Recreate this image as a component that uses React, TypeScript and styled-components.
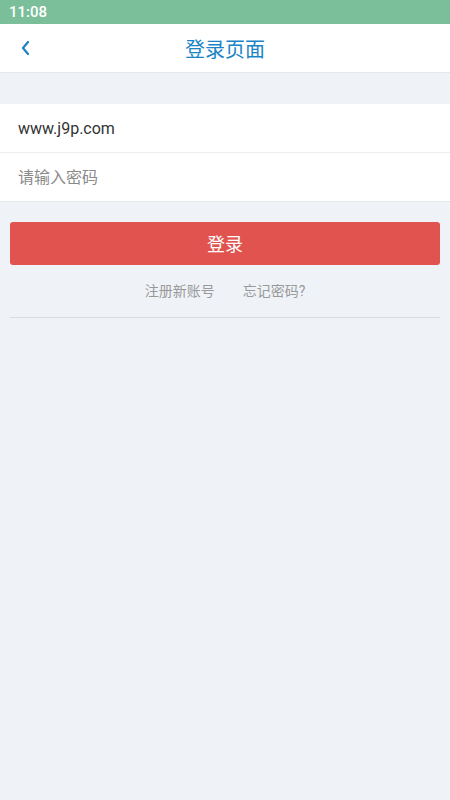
import React from "react";
import styled, { createGlobalStyle } from "styled-components";

const GlobalStyle = createGlobalStyle`
  html, body {
    margin: 0;
    padding: 0;
    background: #eff3f8;
    font-family: Roboto, "Noto Sans CJK SC", sans-serif;
  }
`;

const Page = styled.div`
  min-height: 800px;
  background: #eff3f8;
`;

const StatusBar = styled.div`
  height: 24px;
  background: #7bbf9a;
  color: #fff;
  font-size: 15px;
  font-weight: 500;
  display: flex;
  align-items: center;
  padding: 0 9px;
`;

const Header = styled.div`
  height: 48px;
  background: #fff;
  border-bottom: 1px solid #e4e7ec;
  display: flex;
  align-items: center;
  justify-content: center;
  position: relative;
`;

const BackButton = styled.button`
  position: absolute;
  left: 14px;
  top: 12px;
  width: 24px;
  height: 24px;
  border: 0;
  background: none;
  padding: 0;
  display: flex;
  align-items: center;
  justify-content: center;
`;

const Title = styled.h1`
  margin: 0;
  font-size: 20px;
  font-weight: 400;
  color: #1a84c6;
`;

const Form = styled.div`
  margin-top: 31px;
  background: #fff;
  border-bottom: 1px solid #e4e7ec;
`;

const Field = styled.input<{ $last?: boolean }>`
  display: block;
  width: 100%;
  box-sizing: border-box;
  height: ${(p) => (p.$last ? "48px" : "49px")};
  border: 0;
  border-bottom: ${(p) => (p.$last ? "0" : "1px solid #eceef1")};
  padding: 0 18px;
  font-family: Roboto, "Noto Sans CJK SC", sans-serif;
  font-size: 16px;
  color: #333;
  outline: none;
  background: #fff;

  &::placeholder {
    color: #8a8a8a;
  }
`;

const Actions = styled.div`
  padding: 20px 10px 0;
`;

const LoginButton = styled.button`
  width: 100%;
  height: 43px;
  border: 0;
  border-radius: 3px;
  background: #e0534e;
  color: #fff;
  font-family: Roboto, "Noto Sans CJK SC", sans-serif;
  font-size: 18px;
  padding: 0 0 2px;
`;

const Links = styled.div`
  display: flex;
  justify-content: center;
  gap: 28px;
  padding: 16px 0 16px;
  border-bottom: 1px solid #d8dbdf;
`;

const LinkText = styled.a`
  font-size: 14px;
  color: #999;
  text-decoration: none;
  line-height: 20px;
`;

export default function App() {
  return (
    <Page>
      <GlobalStyle />
      <StatusBar>11:08</StatusBar>
      <Header>
        <BackButton aria-label="返回">
          <svg width="12" height="16" viewBox="0 0 12 16" fill="none">
            <path d="M8 2L3 8l5 6" stroke="#1a84c6" strokeWidth="2.2" strokeLinecap="round" strokeLinejoin="round" />
          </svg>
        </BackButton>
        <Title>登录页面</Title>
      </Header>
      <Form>
        <Field defaultValue="www.j9p.com" />
        <Field $last type="password" placeholder="请输入密码" />
      </Form>
      <Actions>
        <LoginButton>登录</LoginButton>
        <Links>
          <LinkText>注册新账号</LinkText>
          <LinkText>忘记密码?</LinkText>
        </Links>
      </Actions>
    </Page>
  );
}
